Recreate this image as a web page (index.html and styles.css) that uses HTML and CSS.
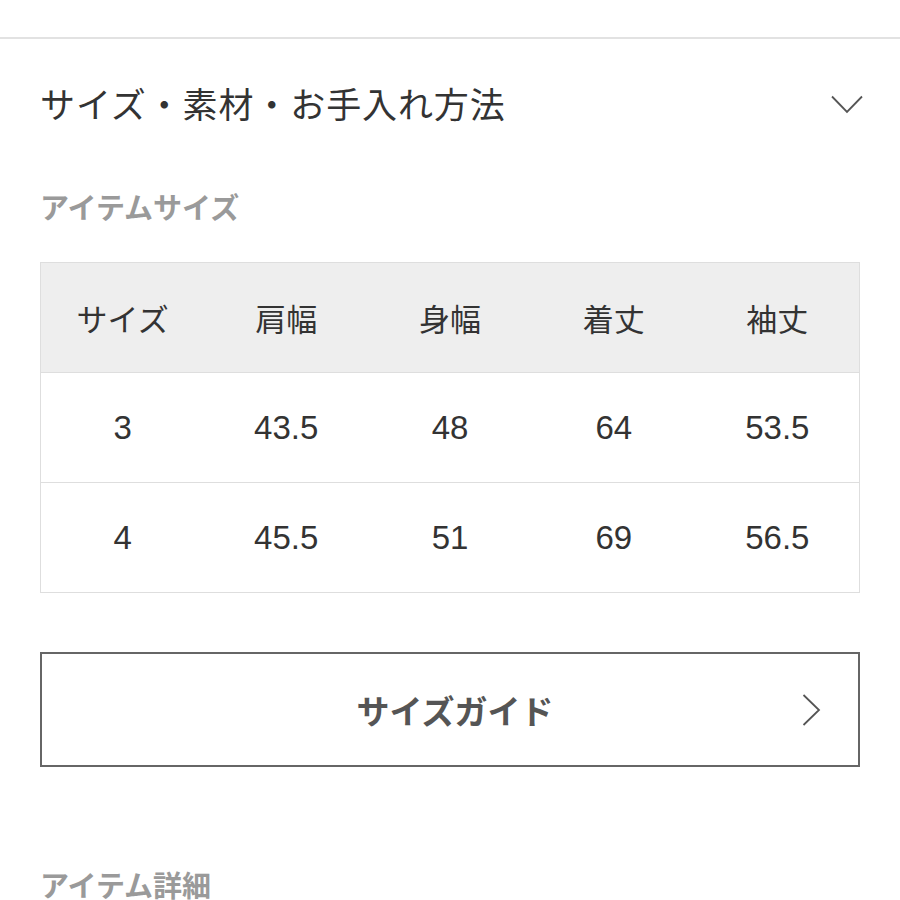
FILE: index.html
```html
<!DOCTYPE html>
<html lang="ja">
<head>
<meta charset="utf-8">
<link rel="stylesheet" href="styles.css">
</head>
<body>
<div class="topline"></div>
<div class="page">
  <div class="acc-head">
    <h2 class="acc-title">サイズ・素材・お手入れ方法</h2>
    <svg class="chev-down" width="32" height="19" viewBox="0 0 32 19"><polyline points="1,1.5 16,17 31,1.5" fill="none" stroke="#555" stroke-width="1.8"/></svg>
  </div>
  <h3 class="sub">アイテムサイズ</h3>
  <table class="size-table">
    <thead>
      <tr><th>サイズ</th><th>肩幅</th><th>身幅</th><th>着丈</th><th>袖丈</th></tr>
    </thead>
    <tbody>
      <tr><td>3</td><td>43.5</td><td>48</td><td>64</td><td>53.5</td></tr>
      <tr><td>4</td><td>45.5</td><td>51</td><td>69</td><td>56.5</td></tr>
    </tbody>
  </table>
  <a class="guide-btn">
    <span class="guide-label">サイズガイド</span>
    <svg class="chev-right" width="19" height="32" viewBox="0 0 19 32"><polyline points="1.5,1 17,16 1.5,31" fill="none" stroke="#555" stroke-width="1.8"/></svg>
  </a>
  <h3 class="sub sub-bottom">アイテム詳細</h3>
</div>
</body>
</html>
```
FILE: styles.css
```css
html, body {
  margin: 0;
  padding: 0;
  background: #fff;
}
body {
  font-family: "Liberation Sans", "Noto Sans CJK JP", sans-serif;
  color: #333;
  overflow: hidden;
  height: 900px;
}
.topline {
  margin-top: 37px;
  height: 2px;
  background: #e2e2e2;
}
.page {
  padding: 0 40px;
}
.acc-head {
  height: 128px;
  display: flex;
  align-items: center;
  justify-content: space-between;
}
.acc-title {
  margin: 0;
  font-family: "Noto Sans CJK JP", sans-serif;
  font-weight: 400;
  font-size: 35px;
  line-height: 40px;
  color: #333;
  letter-spacing: 0.9px;
}
.chev-down {
  margin-right: -3px;
  margin-top: 2px;
}
.sub {
  margin: 19px 0 0;
  font-family: "Noto Sans CJK JP", sans-serif;
  font-weight: 700;
  font-size: 29px;
  line-height: 40px;
  color: #9a9a9a;
}
.size-table {
  margin-top: 36px;
  width: 820px;
  border-collapse: collapse;
  table-layout: fixed;
  border: 1px solid #dedede;
}
.size-table th,
.size-table td {
  height: 109px;
  padding: 0;
  text-align: center;
  vertical-align: middle;
  color: #333;
}
.size-table th {
  background: #eeeeee;
  font-family: "Noto Sans CJK JP", sans-serif;
  font-weight: 400;
  font-size: 31px;
}
.size-table td {
  font-size: 33px;
  border-top: 1px solid #dedede;
}
.guide-btn {
  margin-top: 59px;
  height: 111px;
  border: 2px solid #666;
  display: flex;
  align-items: center;
  justify-content: center;
  position: relative;
  box-sizing: content-box;
  width: 816px;
}
.guide-label {
  font-family: "Noto Sans CJK JP", sans-serif;
  font-weight: 700;
  font-size: 33px;
  color: #555;
  margin-left: 10px;
}
.chev-right {
  position: absolute;
  right: 37px;
  top: 40px;
}
.sub-bottom {
  margin-top: 97px;
}
```
